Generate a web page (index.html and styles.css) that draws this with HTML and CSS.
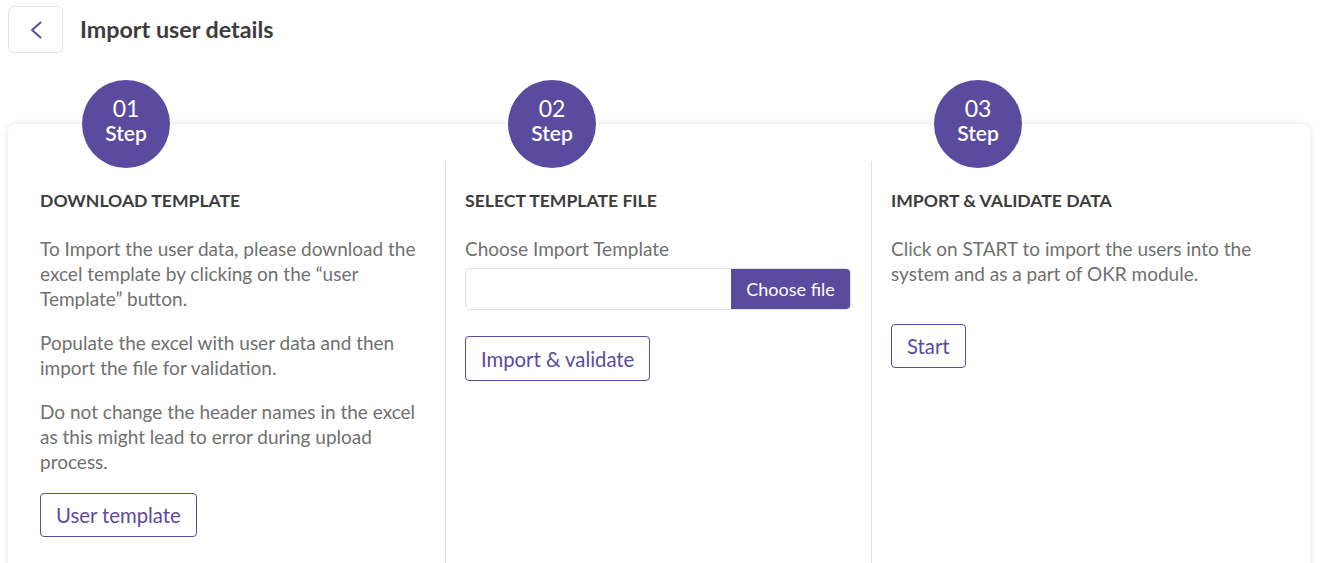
FILE: index.html
```html
<!DOCTYPE html>
<html lang="en">
  <head>
    <meta charset="UTF-8" />
    <meta name="viewport" content="width=device-width, initial-scale=1.0" />
    <title>Import user details</title>
    <link rel="stylesheet" href="styles.css">
  </head>
  <body>
    <div class="page-header">
      <button class="back-button" aria-label="Back">
        <svg width="14" height="20" viewBox="0 0 14 20">
          <path d="M11.5 2.5 L3 10 L11.5 17.5" fill="none" stroke="#5b4b9e" stroke-width="2" stroke-linecap="round" stroke-linejoin="round" />
        </svg>
      </button>
      <div class="page-title">Import user details</div>
    </div>

    <div class="import-card">
      <div class="step-col">
        <div class="step-badge">
          <span class="step-num">01</span>
          <span class="step-word">Step</span>
        </div>
        <div class="step-title">DOWNLOAD TEMPLATE</div>
        <p class="step-text">
          To Import the user data, please download the excel template by
          clicking on the “user Template” button.
        </p>
        <p class="step-text">
          Populate the excel with user data and then import the file for
          validation.
        </p>
        <p class="step-text">
          Do not change the header names in the excel as this might lead to
          error during upload process.
        </p>
        <button class="outline-button">User template</button>
      </div>

      <div class="step-col">
        <div class="step-badge">
          <span class="step-num">02</span>
          <span class="step-word">Step</span>
        </div>
        <div class="step-title">SELECT TEMPLATE FILE</div>
        <div class="field-label">Choose Import Template</div>
        <div class="file-input">
          <div class="file-name"></div>
          <button class="file-button">Choose file</button>
        </div>
        <button class="outline-button validate-button">Import &amp; validate</button>
      </div>

      <div class="step-col">
        <div class="step-badge">
          <span class="step-num">03</span>
          <span class="step-word">Step</span>
        </div>
        <div class="step-title">IMPORT &amp; VALIDATE DATA</div>
        <p class="step-text">
          Click on START to import the users into the system and as a part of
          OKR module.
        </p>
        <button class="outline-button start-button">Start</button>
      </div>
    </div>
  </body>
</html>
```

FILE: styles.css
```css
body {
  margin: 0;
  padding: 6px 12px 0 8px;
  font-family: Lato, "Open Sans", Arial, sans-serif;
  background: #fff;
  color: #3d3d3d;
}

.page-header {
  display: flex;
  align-items: center;
  gap: 17px;
}

.back-button {
  width: 55px;
  height: 47px;
  border: 1px solid #e3e3e3;
  border-radius: 6px;
  background: white;
  display: flex;
  align-items: center;
  justify-content: center;
  cursor: pointer;
  padding: 0;
}

.page-title {
  font-size: 23.3px;
  font-weight: bold;
  color: #3d3d3d;
  margin-top: -2px;
}

.import-card {
  margin-top: 71px;
  padding: 37px 13px 0 11px;
  background: white;
  border-radius: 8px;
  box-shadow: 0 0 6px rgba(0, 0, 0, 0.12);
  display: grid;
  grid-template-columns: repeat(3, 1fr);
}

.step-col {
  position: relative;
  min-height: 420px;
  padding: 29px 20px 0 21px;
}

.step-col + .step-col {
  border-left: 1px solid #e2e2e2;
  padding-left: 19px;
}

.step-badge {
  position: absolute;
  top: -81px;
  left: 63px;
  width: 88px;
  height: 88px;
  border-radius: 50%;
  background: #5b4b9e;
  color: white;
  display: flex;
  flex-direction: column;
  align-items: center;
  justify-content: center;
  line-height: 1;
}

.step-col + .step-col .step-badge {
  left: 62px;
}

.step-num {
  font-size: 23px;
  margin-top: -8px;
}

.step-word {
  font-size: 21px;
  font-weight: 600;
  margin-top: 2px;
}

.step-title {
  font-size: 17.6px;
  font-weight: bold;
  line-height: 22px;
  color: #3d3d3d;
  margin-bottom: 24px;
}

.step-text {
  font-size: 19px;
  line-height: 25px;
  color: #707070;
  margin: 0 0 19px;
}

.field-label {
  font-size: 19px;
  line-height: 25px;
  color: #707070;
  margin-bottom: 7px;
}

.file-input {
  display: flex;
  height: 42px;
  border: 1px solid #e2e2e2;
  border-radius: 5px;
  overflow: hidden;
  box-sizing: border-box;
}

.file-name {
  flex: 1;
}

.file-button {
  width: 119px;
  border: none;
  background: #5b4b9e;
  color: white;
  font-family: inherit;
  font-size: 18px;
  cursor: pointer;
}

.outline-button {
  font-family: inherit;
  font-size: 20.3px;
  color: #5b4b9e;
  background: white;
  border: 1px solid #5b4b9e;
  border-radius: 4px;
  height: 44px;
  padding: 0 15px;
  cursor: pointer;
}

.validate-button {
  margin-top: 26px;
  height: 45px;
}

.start-button {
  margin-top: 19px;
}
```
